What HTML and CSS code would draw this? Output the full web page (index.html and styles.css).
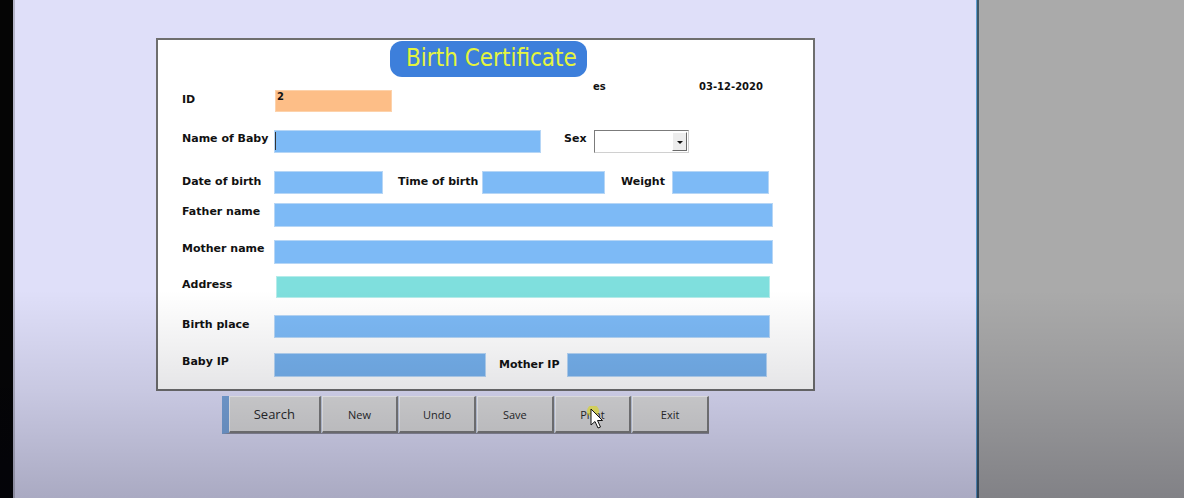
FILE: index.html
```html
<!DOCTYPE html>
<html lang="en">
<head>
    <meta charset="UTF-8">
    <meta name="viewport" content="width=device-width, initial-scale=1.0">
    <title>Birth Certificate</title>
    <link rel="stylesheet" href="styles.css">
</head>
<body>
    <div class="screen">
        <div class="bezel"></div>

        <!-- Form workspace -->
        <div class="workspace">
            <div class="form-card">
                <div class="header">
                    <h1 class="title-pill">Birth Certificate</h1>
                    <div class="meta-line">
                        <span class="meta-es">es</span>
                        <span class="meta-date">03-12-2020</span>
                    </div>
                </div>

                <div class="row row-id">
                    <label class="field-label">ID</label>
                    <div class="field field-id">2</div>
                </div>

                <div class="row row-name">
                    <label class="field-label">Name of Baby</label>
                    <div class="field field-name"><span class="caret"></span></div>
                    <label class="field-label label-sex">Sex</label>
                    <div class="combo">
                        <span class="combo-btn"><span class="combo-arrow"></span></span>
                    </div>
                </div>

                <div class="row row-dob">
                    <label class="field-label">Date of birth</label>
                    <div class="field field-dob"></div>
                    <label class="field-label label-time">Time of birth</label>
                    <div class="field field-time"></div>
                    <label class="field-label label-weight">Weight</label>
                    <div class="field field-weight"></div>
                </div>

                <div class="row row-father">
                    <label class="field-label">Father name</label>
                    <div class="field field-wide"></div>
                </div>

                <div class="row row-mother">
                    <label class="field-label">Mother name</label>
                    <div class="field field-wide"></div>
                </div>

                <div class="row row-address">
                    <label class="field-label">Address</label>
                    <div class="field field-address"></div>
                </div>

                <div class="row row-place">
                    <label class="field-label">Birth place</label>
                    <div class="field field-place"></div>
                </div>

                <div class="row row-ip">
                    <label class="field-label">Baby IP</label>
                    <div class="field field-baby-ip"></div>
                    <label class="field-label label-mother-ip">Mother IP</label>
                    <div class="field field-mother-ip"></div>
                </div>
            </div>

            <!-- Command buttons -->
            <div class="toolbar">
                <button class="cmd-btn btn-search">Search</button>
                <button class="cmd-btn btn-new">New</button>
                <button class="cmd-btn btn-undo">Undo</button>
                <button class="cmd-btn btn-save">Save</button>
                <button class="cmd-btn btn-print">Print</button>
                <button class="cmd-btn btn-exit">Exit</button>
            </div>
        </div>

        <div class="divider"></div>
        <div class="sidebar"></div>

        <div class="shade"></div>

        <!-- Mouse pointer over Print -->
        <svg class="pointer" width="24" height="28" viewBox="0 0 24 28">
            <circle cx="6" cy="5" r="6" fill="#d6d23a" opacity="0.75"/>
            <path d="M4 3 L4 19 L8 15.5 L11 22 L13.5 21 L10.5 14.5 L15.5 14.5 Z" fill="#ffffff" stroke="#111111" stroke-width="1" stroke-linejoin="round"/>
        </svg>
    </div>
</body>
</html>
```

FILE: styles.css
```css
/* Reset */
* {
    margin: 0;
    padding: 0;
    box-sizing: border-box;
}

body {
    width: 1184px;
    height: 498px;
    overflow: hidden;
    font-family: "DejaVu Sans", Verdana, sans-serif;
}

.screen {
    position: relative;
    display: flex;
    width: 1184px;
    height: 498px;
}

.bezel {
    width: 15px;
    background-color: #050505;
    border-right: 2px solid #b4b4c8;
}

/* Lavender form area */
.workspace {
    width: 961px;
    background-color: #dfdff9;
    display: flex;
    flex-direction: column;
}

.divider {
    width: 3px;
    background-color: #3e5767;
    border-left: 1px solid #5c9ccf;
}

.sidebar {
    flex: 1;
    background-color: #aaaaaa;
}

/* Form card */
.form-card {
    margin-left: 141px;
    margin-top: 38px;
    width: 659px;
    height: 353px;
    background-color: #ffffff;
    border: 2px solid #6e6e6e;
}

.header {
    display: flex;
    flex-direction: column;
    padding-top: 1px;
}

.title-pill {
    margin-left: 232px;
    width: 197px;
    height: 36px;
    padding-left: 16px;
    background-color: #3d7fdb;
    border-radius: 12px;
    color: #e4f43e;
    font-family: "DejaVu Sans Condensed", "DejaVu Sans", sans-serif;
    font-weight: normal;
    font-size: 24px;
    line-height: 35px;
}

.meta-line {
    position: relative;
    height: 10px;
    margin-top: 3px;
    font-size: 10px;
    font-weight: bold;
    line-height: 10px;
    color: #111;
}

.meta-line span {
    position: absolute;
    top: 2px;
}

.meta-es {
    left: 435px;
}

.meta-date {
    left: 541px;
}

/* Rows */
.row {
    display: flex;
    align-items: flex-start;
    padding-left: 24px;
}

.field-label {
    width: 92px;
    font-size: 11px;
    font-weight: bold;
    line-height: 14px;
    color: #111;
    white-space: nowrap;
}

.field {
    background-color: #7dbaf6;
    border: 1px solid #b6d6f6;
}

.row-id { margin-top: 0; }
.row-id .field-label { margin-top: 3px; }
.field-id {
    margin-left: 1px;
    width: 117px;
    height: 22px;
    background-color: #fdbe87;
    border-color: #fdd2ab;
    font-size: 10px;
    font-weight: bold;
    line-height: 10px;
    padding-left: 1px;
    padding-top: 1px;
    color: #111;
}

.row-name { margin-top: 18px; }
.row-name .field-label { margin-top: 2px; }
.field-name {
    width: 267px;
    height: 23px;
    position: relative;
}

.caret {
    position: absolute;
    left: 0;
    top: 1px;
    width: 1px;
    height: 18px;
    background-color: #333;
}

.label-sex {
    width: 30px;
    margin-left: 23px;
}

.combo {
    position: relative;
    width: 95px;
    height: 23px;
    background-color: #ffffff;
    border-top: 1px solid #7b7b7b;
    border-left: 1px solid #7b7b7b;
    border-right: 1px solid #d0d0d0;
    border-bottom: 1px solid #d0d0d0;
}

.combo-btn {
    position: absolute;
    right: 1px;
    top: 1px;
    width: 15px;
    height: 19px;
    background-color: #ededed;
    border-right: 1px solid #6a6a6a;
    border-bottom: 1px solid #6a6a6a;
    border-top: 1px solid #ffffff;
    border-left: 1px solid #ffffff;
    display: flex;
    align-items: center;
    justify-content: center;
}

.combo-arrow {
    width: 0;
    height: 0;
    border-left: 3px solid transparent;
    border-right: 3px solid transparent;
    border-top: 3px solid #111;
    margin-top: 2px;
}

.row-dob { margin-top: 18px; }
.row-dob .field-label { margin-top: 4px; }
.field-dob { width: 109px; height: 23px; }
.label-time { width: 84px; margin-left: 15px; }
.field-time { width: 123px; height: 23px; }
.label-weight { width: 51px; margin-left: 16px; }
.field-weight { width: 97px; height: 23px; }

.row-father { margin-top: 9px; }
.row-father .field-label { margin-top: 2px; }
.field-wide { width: 499px; height: 24px; }

.row-mother { margin-top: 13px; }
.row-mother .field-label { margin-top: 2px; }

.row-address { margin-top: 12px; }
.row-address .field-label { margin-top: 2px; }
.field-address {
    margin-left: 2px;
    width: 494px;
    height: 22px;
    background-color: #7fdfdd;
    border-color: #b5ecea;
}

.row-place { margin-top: 17px; }
.row-place .field-label { margin-top: 3px; }
.field-place { width: 496px; height: 23px; }

.row-ip { margin-top: 15px; }
.row-ip .field-label { margin-top: 2px; }
.field-baby-ip { width: 212px; height: 24px; background-color: #76b2ee; }
.row-ip .label-mother-ip { width: 68px; margin-left: 13px; margin-top: 5px; }
.field-mother-ip { width: 200px; height: 24px; background-color: #76b2ee; }

/* Toolbar */
.toolbar {
    display: flex;
    margin-left: 207px;
    margin-top: 5px;
    width: 487px;
    height: 38px;
    background-color: #c3cde2;
    border-left: 7px solid #78a4da;
    border-bottom: 1px solid #8c8c9c;
    gap: 1px;
}

.cmd-btn {
    height: 37px;
    background-color: #dcdcdc;
    border-top: 1px solid #f4f4f4;
    border-left: 1px solid #f4f4f4;
    border-right: 2px solid #7c7c7c;
    border-bottom: 2px solid #7c7c7c;
    font-family: "Open Sans", sans-serif;
    font-size: 11px;
    color: #2a2a2a;
}

.btn-search { width: 92px; font-size: 13px; }
.btn-new { width: 77px; }
.btn-undo { width: 77px; }
.btn-save { width: 77px; }
.btn-print { width: 77px; }
.btn-exit { width: 77px; }

/* Lower part of the video frame is darker */
.shade {
    position: absolute;
    inset: 0;
    pointer-events: none;
    background: linear-gradient(to bottom,
        rgba(0, 0, 20, 0) 0px,
        rgba(0, 0, 20, 0) 290px,
        rgba(0, 0, 20, 0.1) 390px,
        rgba(0, 0, 20, 0.24) 498px);
}

.pointer {
    position: absolute;
    left: 587px;
    top: 406px;
}
```
